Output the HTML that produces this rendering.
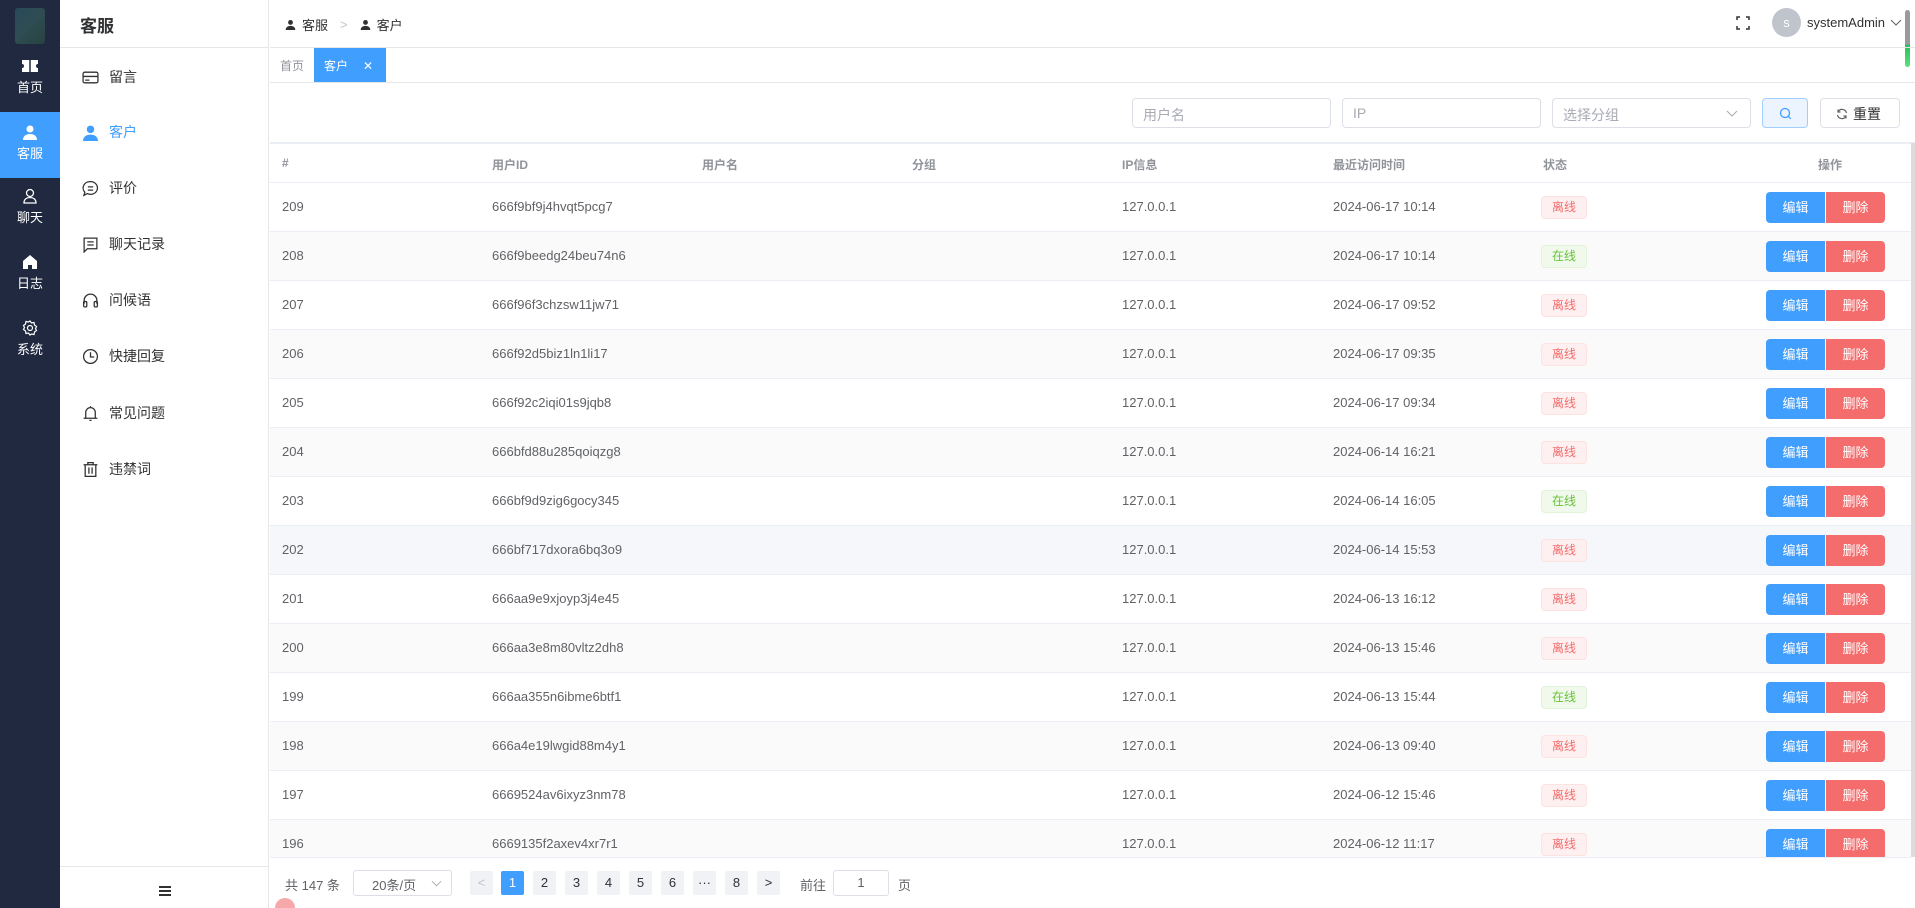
<!DOCTYPE html>
<html><head><meta charset="utf-8"><style>
*{box-sizing:border-box;margin:0;padding:0}
body{width:1915px;height:908px;overflow:hidden;font-family:"Liberation Sans","Noto Sans CJK SC",sans-serif;background:#fff;position:relative;color:#606266}
.a{position:absolute}
.nav{left:0;top:0;width:60px;height:908px;background:#20293f}
.ni{position:absolute;left:0;width:60px;text-align:center;color:#fff;font-size:13px}
.side{left:60px;top:0;width:209px;height:908px;border-right:1px solid #e6e6e6;background:#fff}
.si{position:absolute;left:22px;font-size:14px;color:#303133;display:flex;align-items:center;gap:10px}
.si svg{width:17px;height:17px}
.row{position:absolute;left:270px;width:1641px;height:49px;border-bottom:1px solid #ebeef5;font-size:13px;color:#606266}
.row span{position:absolute;top:16px}
.tag{position:absolute;top:13px;left:1271px;width:46px;height:23px;border-radius:4px;font-size:12px;text-align:center;line-height:21px}
.off{background:#fef0f0;border:1px solid #fde2e2;color:#f56c6c}
.on{background:#f0f9eb;border:1px solid #e1f3d8;color:#67c23a}
.b1,.b2{position:absolute;top:9px;width:59px;height:31px;color:#fff;font-size:13px;text-align:center;line-height:31px}
.b1{left:1496px;background:#409eff;border-radius:4px 0 0 4px}
.b2{left:1556px;background:#f56c6c;border-radius:0 4px 4px 0}
.inp{position:absolute;top:98px;height:30px;border:1px solid #dcdfe6;border-radius:4px;font-size:14px;color:#a8abb2;padding:6px 10px}
.pg{position:absolute;top:871px;width:23px;height:24px;background:#f0f2f5;border-radius:2px;font-size:13px;color:#303133;text-align:center;line-height:24px}
</style></head><body>
<div class="a nav">
 <div class="a" style="left:15px;top:8px;width:30px;height:36px;background:linear-gradient(135deg,#2a4a5a,#2e4c52 50%,#27423f);border-radius:3px"></div>
 <div class="ni" style="top:60px"><svg width="16" height="12" viewBox="0 0 16 12"><path d="M0 0h16v4a2 2 0 0 0 0 4v4H0V8a2 2 0 0 0 0-4z" fill="#fff"/><path d="M8 0v12" stroke="#20293f" stroke-width="1.5"/></svg><div style="margin-top:2px">首页</div></div>
 <div class="ni" style="top:112px;height:66px;background:#409eff;padding-top:12px"><svg width="16" height="16" viewBox="0 0 16 16"><circle cx="8" cy="5" r="3.5" fill="#fff"/><path d="M1 16c0-4 3-6 7-6s7 2 7 6z" fill="#fff"/></svg><div>客服</div></div>
 <div class="ni" style="top:188px"><svg width="16" height="16" viewBox="0 0 16 16" fill="none" stroke="#fff" stroke-width="1.3"><circle cx="8" cy="5" r="3.5"/><path d="M2 15c0-4 3-5.5 6-5.5s6 1.5 6 5.5z"/></svg><div>聊天</div></div>
 <div class="ni" style="top:254px"><svg width="16" height="16" viewBox="0 0 16 16"><path d="M8 1L1 7v8h5v-4h4v4h5V7z" fill="#fff"/></svg><div>日志</div></div>
 <div class="ni" style="top:320px"><svg width="16" height="16" viewBox="0 0 16 16" fill="none" stroke="#fff" stroke-width="1.2"><circle cx="8" cy="8" r="2.5"/><path d="M8 1l1.5 2 2.5-.5.5 2.5 2 1.5-1 2 1 2-2 1.5-.5 2.5-2.5-.5L8 15l-1.5-2-2.5.5-.5-2.5-2-1.5 1-2-1-2 2-1.5.5-2.5 2.5.5z"/></svg><div>系统</div></div>
</div>
<div class="a side">
 <div class="a" style="left:20px;top:12px;font-size:17px;font-weight:bold;color:#303133">客服</div>
 <div class="a" style="left:0;top:47px;width:208px;border-top:1px solid #e6e6e6"></div>
 <div class="si" style="top:67px"><svg viewBox="0 0 16 16" fill="none" stroke="#303133" stroke-width="1.2"><rect x="1" y="3" width="14" height="10" rx="1.5"/><path d="M1 7h14M3 10.5h4"/></svg>留言</div>
 <div class="si" style="top:122px;color:#409eff"><svg viewBox="0 0 16 16"><circle cx="8" cy="5" r="3.5" fill="#409eff"/><path d="M1 16c0-4 3-6 7-6s7 2 7 6z" fill="#409eff"/></svg>客户</div>
 <div class="si" style="top:178px"><svg viewBox="0 0 16 16" fill="none" stroke="#303133" stroke-width="1.2"><path d="M8 1.5a6.5 6 0 1 1-3 11.3L1.8 14.5l.9-3A6.5 6 0 0 1 8 1.5z"/><path d="M5.5 6.5h5M5.5 9.5h5"/></svg>评价</div>
 <div class="si" style="top:234px"><svg viewBox="0 0 16 16" fill="none" stroke="#303133" stroke-width="1.2"><path d="M2 2h12v10H5l-3 3z"/><path d="M5 5.5h6M5 8.5h6"/></svg>聊天记录</div>
 <div class="si" style="top:290px"><svg viewBox="0 0 16 16" fill="none" stroke="#303133" stroke-width="1.2"><path d="M2 11V8a6 6 0 0 1 12 0v3"/><rect x="1.5" y="9" width="3" height="5" rx="1"/><rect x="11.5" y="9" width="3" height="5" rx="1"/></svg>问候语</div>
 <div class="si" style="top:346px"><svg viewBox="0 0 16 16" fill="none" stroke="#303133" stroke-width="1.2"><circle cx="8" cy="8" r="6.5"/><path d="M8 4v4.5h3.5"/></svg>快捷回复</div>
 <div class="si" style="top:403px"><svg viewBox="0 0 16 16" fill="none" stroke="#303133" stroke-width="1.2"><path d="M3.5 12V7a4.5 4.5 0 0 1 9 0v5M1.5 12.5h13M8 1v1.5M7 14.5h2"/></svg>常见问题</div>
 <div class="si" style="top:459px"><svg viewBox="0 0 16 16" fill="none" stroke="#303133" stroke-width="1.2"><path d="M1.5 3.5h13M5.5 3.5V1.5h5v2M3 3.5v11h10v-11M6.5 6v6M9.5 6v6"/></svg>违禁词</div>
 <div class="a" style="left:0;top:866px;width:208px;border-top:1px solid #e6e6e6"></div>
 <div class="a" style="left:99px;top:886px;width:12px;height:2px;background:#303133;box-shadow:0 4px 0 #303133,0 8px 0 #303133"></div>
</div>
<!-- header -->
<div class="a" style="left:285px;top:15px;font-size:13px;color:#303133;display:flex;align-items:center;gap:6px">
<svg width="11" height="11" viewBox="0 0 16 16"><circle cx="8" cy="5" r="3.5" fill="#303133"/><path d="M1 16c0-4 3-6 7-6s7 2 7 6z" fill="#303133"/></svg>客服<span style="color:#c0c4cc;margin:0 6px">&gt;</span><svg width="11" height="11" viewBox="0 0 16 16"><circle cx="8" cy="5" r="3.5" fill="#303133"/><path d="M1 16c0-4 3-6 7-6s7 2 7 6z" fill="#303133"/></svg>客户</div>
<svg class="a" style="left:1736px;top:16px" width="14" height="14" viewBox="0 0 14 14" fill="none" stroke="#303133" stroke-width="1.5"><path d="M1 4V1h3M10 1h3v3M13 10v3h-3M4 13H1v-3"/></svg>
<div class="a" style="left:1772px;top:8px;width:29px;height:29px;border-radius:50%;background:#c0c4cc;color:#fff;font-size:13px;text-align:center;line-height:29px">s</div>
<div class="a" style="left:1807px;top:15px;font-size:13px;color:#303133">systemAdmin</div>
<svg class="a" style="left:1890px;top:19px" width="12" height="8" viewBox="0 0 12 8" fill="none" stroke="#606266"><path d="M1 1l5 5 5-5"/></svg>
<div class="a" style="left:1905px;top:10px;width:5px;height:57px;border-radius:3px;background:linear-gradient(#9a9a9a 0,#9a9a9a 60%,#22c25a 62%,#5fe07f)"></div>
<div class="a" style="left:270px;top:47px;width:1645px;border-top:1px solid #e6e6e6"></div>
<div class="a" style="left:280px;top:57px;font-size:12px;color:#909399">首页</div>
<div class="a" style="left:314px;top:48px;width:72px;height:34px;background:#409eff;color:#fff;font-size:12px;padding:9px 0 0 10px">客户<span style="margin-left:15px">✕</span></div>
<div class="a" style="left:270px;top:82px;width:1645px;border-top:1px solid #e6e6e6"></div>
<!-- search -->
<div class="inp" style="left:1132px;width:199px">用户名</div>
<div class="inp" style="left:1342px;width:199px">IP</div>
<div class="inp" style="left:1552px;width:199px">选择分组<svg style="position:absolute;right:12px;top:11px" width="12" height="7" viewBox="0 0 12 7" fill="none" stroke="#a8abb2"><path d="M1 1l5 5 5-5"/></svg></div>
<div class="a" style="left:1762px;top:98px;width:46px;height:30px;border:1px solid #a0cfff;background:#ecf5ff;border-radius:4px"><svg style="position:absolute;left:16px;top:8px" width="13" height="13" viewBox="0 0 13 13" fill="none" stroke="#409eff" stroke-width="1.3"><circle cx="6" cy="6" r="4.5"/><path d="M9.3 9.3l2.5 2.5"/></svg></div>
<div class="a" style="left:1820px;top:98px;width:80px;height:30px;border:1px solid #dcdfe6;border-radius:4px;font-size:14px;color:#303133;padding:5px 0 0 32px">重置<svg style="position:absolute;left:15px;top:9px" width="12" height="12" viewBox="0 0 12 12" fill="none" stroke="#606266" stroke-width="1.2"><path d="M10.5 5A4.5 4.5 0 0 0 2 4M1.5 7A4.5 4.5 0 0 0 10 8M2 1.5V4h2.5M10 10.5V8H7.5"/></svg></div>
<div class="a" style="left:270px;top:142px;width:1645px;border-top:2px solid #ebeef5"></div>
<!-- table header -->
<div class="row" style="top:143px;height:40px;font-weight:bold;color:#909399;font-size:12px">
<span style="left:12px;top:13px">#</span><span style="left:222px;top:13px">用户ID</span><span style="left:432px;top:13px">用户名</span><span style="left:642px;top:13px">分组</span><span style="left:852px;top:13px">IP信息</span><span style="left:1063px;top:13px">最近访问时间</span><span style="left:1273px;top:13px">状态</span><span style="left:1548px;top:13px">操作</span></div>
<div id="rows"></div>
<div class="a" style="left:1911px;top:143px;width:4px;height:714px;background:#dcdcdc"></div>
<div class="a" style="left:270px;top:857px;width:1641px;border-top:1px solid #ebeef5;background:#fff;height:51px"></div>
<!-- pagination -->
<div class="a" style="left:285px;top:875px;font-size:13px;color:#606266">共 147 条</div>
<div class="a" style="left:353px;top:870px;width:99px;height:26px;border:1px solid #dcdfe6;border-radius:3px;font-size:13px;color:#606266;padding:4px 0 0 18px">20条/页<svg style="position:absolute;right:9px;top:9px" width="11" height="7" viewBox="0 0 12 7" fill="none" stroke="#a8abb2"><path d="M1 1l5 5 5-5"/></svg></div>
<div class="pg" style="left:470px;color:#c0c4cc">&lt;</div>
<div class="pg" style="left:501px;background:#409eff;color:#fff">1</div>
<div class="pg" style="left:533px">2</div><div class="pg" style="left:565px">3</div><div class="pg" style="left:597px">4</div><div class="pg" style="left:629px">5</div><div class="pg" style="left:661px">6</div><div class="pg" style="left:693px">···</div><div class="pg" style="left:725px">8</div><div class="pg" style="left:757px">&gt;</div>
<div class="a" style="left:800px;top:875px;font-size:13px">前往</div>
<div class="a" style="left:833px;top:870px;width:56px;height:26px;border:1px solid #dcdfe6;border-radius:3px;font-size:13px;text-align:center;line-height:24px">1</div>
<div class="a" style="left:898px;top:875px;font-size:13px">页</div>
<div class="a" style="left:275px;top:898px;width:20px;height:10px;border-radius:10px 10px 0 0;background:#f7a8a8"></div>
<script>
const d=[["209","666f9bf9j4hvqt5pcg7","2024-06-17 10:14",0],["208","666f9beedg24beu74n6","2024-06-17 10:14",1],["207","666f96f3chzsw11jw71","2024-06-17 09:52",0],["206","666f92d5biz1ln1li17","2024-06-17 09:35",0],["205","666f92c2iqi01s9jqb8","2024-06-17 09:34",0],["204","666bfd88u285qoiqzg8","2024-06-14 16:21",0],["203","666bf9d9zig6gocy345","2024-06-14 16:05",1],["202","666bf717dxora6bq3o9","2024-06-14 15:53",0],["201","666aa9e9xjoyp3j4e45","2024-06-13 16:12",0],["200","666aa3e8m80vltz2dh8","2024-06-13 15:46",0],["199","666aa355n6ibme6btf1","2024-06-13 15:44",1],["198","666a4e19lwgid88m4y1","2024-06-13 09:40",0],["197","6669524av6ixyz3nm78","2024-06-12 15:46",0],["196","6669135f2axev4xr7r1","2024-06-12 11:17",0]];
let h="";d.forEach((r,i)=>{const bg=i==7?"#f5f7fa":(i%2?"#fafafa":"#fff");
h+=`<div class="row" style="top:${183+i*49}px;background:${bg}"><span style="left:12px">${r[0]}</span><span style="left:222px">${r[1]}</span><span style="left:852px">127.0.0.1</span><span style="left:1063px">${r[2]}</span><div class="tag ${r[3]?"on":"off"}">${r[3]?"在线":"离线"}</div><div class="b1">编辑</div><div class="b2">删除</div></div>`});
document.getElementById("rows").innerHTML=h;
</script>
</body></html>
